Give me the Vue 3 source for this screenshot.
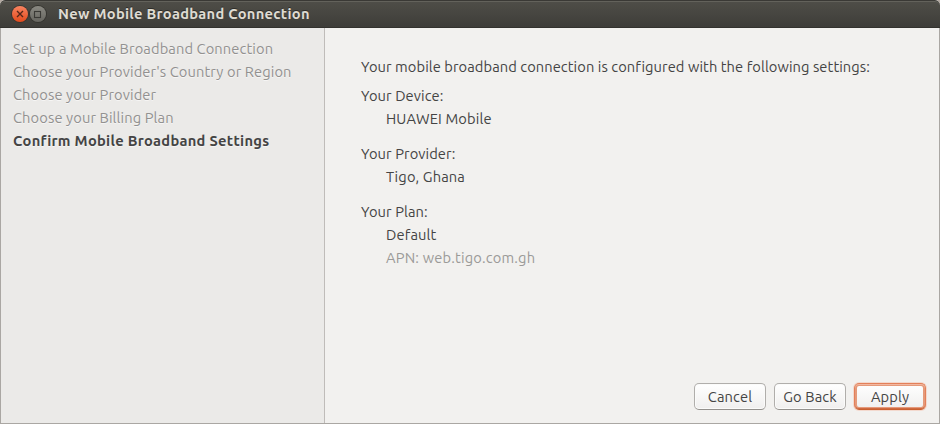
<template>
  <div class="window">
    <header class="titlebar">
      <button class="win-btn close" aria-label="Close">
        <svg viewBox="0 0 16 16" width="16" height="16">
          <path d="M5 5l6 6M11 5l-6 6" fill="none" stroke="#55261a" stroke-width="1.4" />
        </svg>
      </button>
      <button class="win-btn maximize" aria-label="Maximize">
        <svg viewBox="0 0 16 16" width="16" height="16">
          <rect x="4.5" y="5.5" width="6" height="6" fill="none" stroke="#3a3935" stroke-width="1.1" />
        </svg>
      </button>
      <h1 class="title">New Mobile Broadband Connection</h1>
    </header>

    <div class="body">
      <ul class="steps">
        <li v-for="(step, i) in steps" :key="step" :class="{ current: i === current }">{{ step }}</li>
      </ul>

      <main class="page">
        <p class="intro">Your mobile broadband connection is configured with the following settings:</p>
        <dl v-for="s in settings" :key="s.label" class="setting">
          <dt>{{ s.label }}</dt>
          <dd>{{ s.value }}</dd>
          <dd v-if="s.note" class="note">{{ s.note }}</dd>
        </dl>
        <div class="actions">
          <button class="btn">Cancel</button>
          <button class="btn">Go Back</button>
          <button class="btn apply">Apply</button>
        </div>
      </main>
    </div>
  </div>
</template>

<script setup>
import { ref } from 'vue'

const steps = [
  'Set up a Mobile Broadband Connection',
  "Choose your Provider's Country or Region",
  'Choose your Provider',
  'Choose your Billing Plan',
  'Confirm Mobile Broadband Settings',
]
const current = ref(4)

const settings = [
  { label: 'Your Device:', value: 'HUAWEI Mobile' },
  { label: 'Your Provider:', value: 'Tigo, Ghana' },
  { label: 'Your Plan:', value: 'Default', note: 'APN: web.tigo.com.gh' },
]
</script>

<style>
body { margin: 0; background: #b5aaa2; }
</style>

<style scoped>
.window {
  width: 940px; height: 424px;
  box-sizing: border-box;
  display: flex;
  flex-direction: column;
  overflow: hidden;
  border-radius: 5px 5px 0 0;
  background: #f2f1ef;
  font-family: Ubuntu, "Noto Sans", sans-serif;
  font-size: 14.667px;
  letter-spacing: 0.09px;
  line-height: 23px;
  color: #444;
  white-space: nowrap;
}
.titlebar {
  height: 28px;
  box-sizing: border-box;
  padding-left: 12px;
  display: flex;
  align-items: center;
  background: linear-gradient(#4f4e48, #3e3d39);
  border-top: 1px solid #3a3935;
  border-bottom: 1px solid #33322e;
  border-radius: 5px 5px 0 0;
  box-shadow: inset 0 1px #63625b;
}
.win-btn {
  width: 16px; height: 16px;
  padding: 0;
  border: none;
  border-radius: 50%;
  margin-right: 2px;
  flex-shrink: 0;
}
.win-btn svg { display: block; }
.close { background: linear-gradient(#f98360, #e34a1c); box-shadow: 0 0 0 1px #3b352f; }
.maximize { background: linear-gradient(#8a8982, #66655f); box-shadow: 0 0 0 1px #35342f; }
.title {
  margin: 0 0 2px 10px;
  font-size: 14.667px;
  font-weight: 700;
  letter-spacing: 0.29px;
  color: #dfdbd2;
  text-shadow: 0 -1px #2d2c29;
}
.body {
  flex: 1;
  display: flex;
  border: 1px solid #aaa7a3;
  border-top: none;
}
.steps {
  width: 311px;
  margin: 0;
  padding: 9px 0 0 12px;
  list-style: none;
  background: #ebeae8;
  border-right: 1px solid #bfbcb9;
  color: #929190;
  letter-spacing: 0.11px;
  text-shadow: 0 1px #f6f5f4;
}
.current { font-weight: 700; letter-spacing: 0.3px; color: #444; }
.page {
  flex: 1;
  display: flex;
  flex-direction: column;
  padding: 27px 13px 13px 36px;
}
.intro { margin: 0 0 6px; letter-spacing: 0.08px; }
.setting { margin: 0 0 12px; }
.setting dd { margin: 0 0 0 25px; letter-spacing: 0.14px; }
.setting .note { color: #9b9a98; letter-spacing: 0.19px; }
.actions {
  margin-top: auto;
  display: flex;
  justify-content: flex-end;
  gap: 8px;
}
.btn {
  width: 72px; height: 27px;
  box-sizing: border-box;
  padding: 0;
  border: 1px solid #b0aeab;
  border-bottom-color: #94918d;
  border-radius: 5px;
  background: linear-gradient(#fff, #f0efee);
  box-shadow: inset 0 0 0 1px #fbfbfa;
  font: inherit;
  letter-spacing: 0.12px;
  color: #444;
}
.apply {
  border: 1px solid #e38059;
  border-bottom-color: #c9602f;
  box-shadow: inset 0 -1px #cf6a42, inset 0 1px #f2b8a2, inset 0 0 0 2px #e59a7a, 0 0 0 1px #f3d9ce;
}
</style>
